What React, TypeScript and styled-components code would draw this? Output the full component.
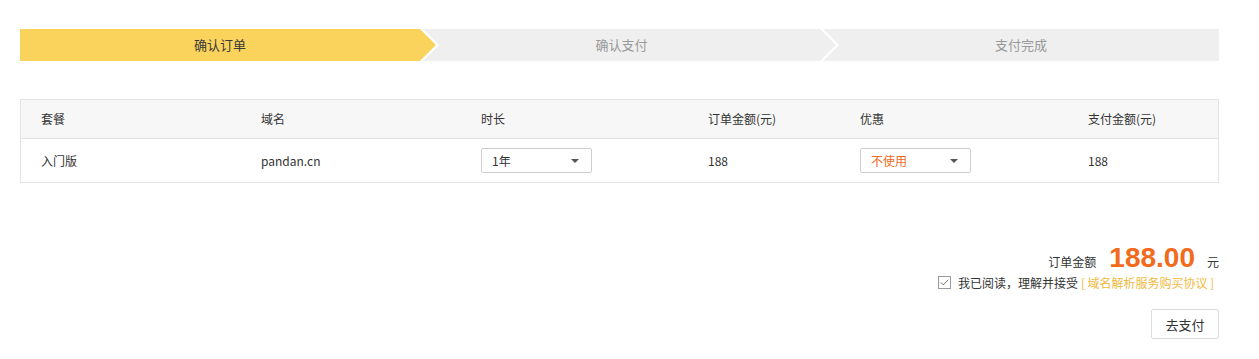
import React from "react";
import styled, { createGlobalStyle } from "styled-components";

const GlobalStyle = createGlobalStyle`
  body { margin: 0; background: #fff; font-family: "Noto Sans CJK SC", "Liberation Sans", sans-serif; color: #333; }
`;

const steps = ["确认订单", "确认支付", "支付完成"];

const columns = ["套餐", "域名", "时长", "订单金额(元)", "优惠", "支付金额(元)"];

export default function App() {
  return (
    <Page>
      <GlobalStyle />
      <Steps>
        {steps.map((s, i) => (
          <Step key={s} $index={i} $active={i === 0}>
            {s}
          </Step>
        ))}
      </Steps>

      <Table>
        <HeadRow>
          {columns.map((c) => (
            <Cell key={c}>{c}</Cell>
          ))}
        </HeadRow>
        <BodyRow>
          <Cell>入门版</Cell>
          <Cell>pandan.cn</Cell>
          <Cell>
            <Select>
              1年
              <Caret />
            </Select>
          </Cell>
          <Cell>188</Cell>
          <Cell>
            <Select $accent>
              不使用
              <Caret />
            </Select>
          </Cell>
          <Cell>188</Cell>
        </BodyRow>
      </Table>

      <Summary>
        <TotalRow>
          <TotalLabel>订单金额</TotalLabel>
          <Amount>188.00</Amount>
          <TotalLabel>元</TotalLabel>
        </TotalRow>
        <AgreeRow>
          <CheckBox>
            <svg width="9" height="7" viewBox="0 0 9 7">
              <path d="M0.8 3.4 L3.3 5.9 L8.2 0.8" fill="none" stroke="#777" strokeWidth="1" />
            </svg>
          </CheckBox>
          <span>我已阅读，理解并接受</span>
          <AgreeLink>[{"\u2009"}域名解析服务购买协议{"\u2009"}]</AgreeLink>
        </AgreeRow>
        <PayButton>去支付</PayButton>
      </Summary>
    </Page>
  );
}

const Page = styled.div`
  padding: 29px 40px 0 20px;
  width: 1199px;
`;

const Steps = styled.div`
  display: flex;
  height: 32px;
`;

const Step = styled.div<{ $index: number; $active: boolean }>`
  display: flex;
  align-items: center;
  justify-content: center;
  height: 32px;
  box-sizing: border-box;
  font-size: 13px;
  line-height: 32px;
  background: ${(p) => (p.$active ? "#fad35c" : "#efefef")};
  color: ${(p) => (p.$active ? "#3a3a3a" : "#999")};
  position: relative;
  z-index: ${(p) => 3 - p.$index};
  ${(p) =>
    p.$index === 0
      ? `width: 416px; padding-right: 16px; clip-path: polygon(0 0, 400px 0, 416px 16px, 400px 32px, 0 32px);`
      : p.$index === 1
      ? `width: 413px; margin-left: -13px; padding-right: 16px; clip-path: polygon(0 0, 397px 0, 413px 16px, 397px 32px, 0 32px, 16px 16px);`
      : `flex: 1; margin-left: -13px; clip-path: polygon(0 0, 100% 0, 100% 32px, 0 32px, 16px 16px);`}
`;

const Table = styled.div`
  margin-top: 38px;
  border: 1px solid #e3e3e3;
  font-size: 12px;
`;

const Row = styled.div`
  display: grid;
  grid-template-columns: 220px 220px 227px 152px 228px 1fr;
  padding-left: 20px;
  align-items: center;
`;

const HeadRow = styled(Row)`
  height: 38px;
  background: #f7f7f7;
  border-bottom: 1px solid #e3e3e3;
`;

const BodyRow = styled(Row)`
  height: 43px;
`;

const Cell = styled.div`
  line-height: 18px;
  color: #333;
`;

const Select = styled.div<{ $accent?: boolean }>`
  position: relative;
  width: 111px;
  height: 25px;
  box-sizing: border-box;
  border: 1px solid #cfcfcf;
  border-radius: 2px;
  padding-left: 10px;
  line-height: 23px;
  color: ${(p) => (p.$accent ? "#f06a1c" : "#333")};
  background: #fff;
`;

const Caret = styled.span`
  position: absolute;
  right: 12px;
  top: 10px;
  width: 0;
  height: 0;
  border-left: 4px solid transparent;
  border-right: 4px solid transparent;
  border-top: 4px solid #555;
`;

const Summary = styled.div`
  display: flex;
  flex-direction: column;
  align-items: flex-end;
  margin-top: 60px;
`;

const TotalRow = styled.div`
  display: flex;
  align-items: baseline;
  height: 30px;
`;

const TotalLabel = styled.span`
  font-size: 12px;
  color: #333;
`;

const Amount = styled.span`
  font-family: "Liberation Sans", Arial, sans-serif;
  font-weight: bold;
  font-size: 28px;
  line-height: 30px;
  color: #f26a1b;
  margin: 0 12px 0 13px;
`;

const AgreeRow = styled.div`
  display: flex;
  align-items: center;
  height: 22px;
  margin-top: -2px;
  margin-right: 5px;
  font-size: 12px;
  color: #333;
`;

const CheckBox = styled.span`
  display: inline-flex;
  align-items: center;
  justify-content: center;
  width: 11px;
  height: 11px;
  border: 1px solid #999;
  margin-right: 7px;
`;

const AgreeLink = styled.span`
  color: #f0b93c;
  margin-left: 3px;
`;

const PayButton = styled.button`
  margin-top: 16px;
  width: 68px;
  height: 30px;
  border: 1px solid #dcdcdc;
  border-radius: 2px;
  background: #fff;
  font-family: "Noto Sans CJK SC", sans-serif;
  font-size: 13px;
  color: #333;
  padding: 0;
`;
